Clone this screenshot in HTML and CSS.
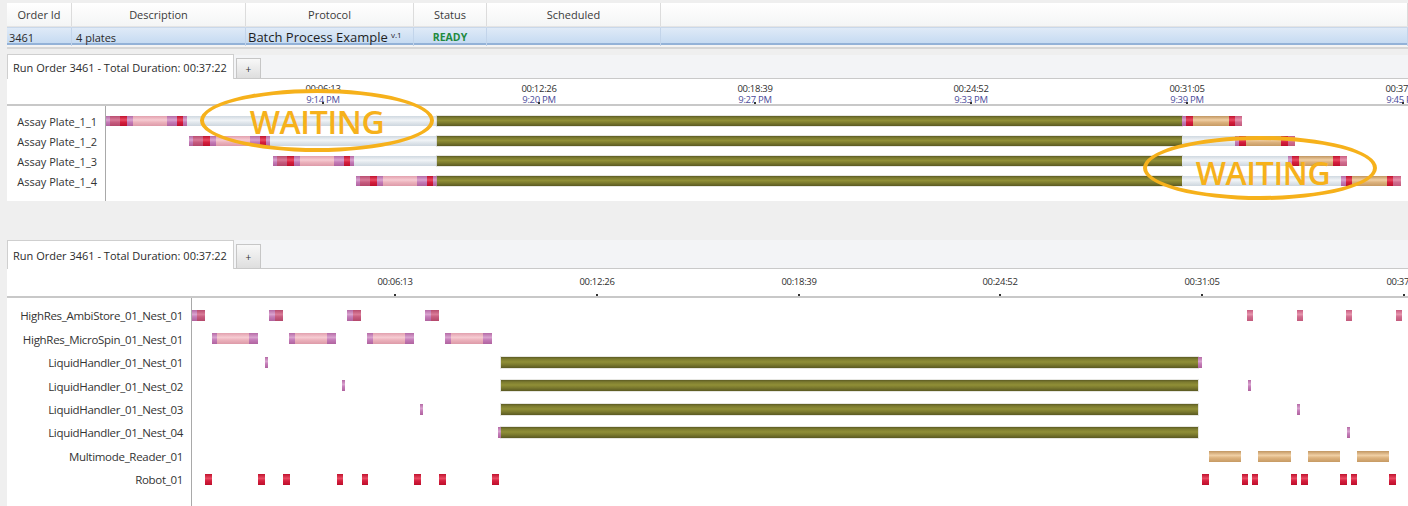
FILE: index.html
```html
<!DOCTYPE html>
<html lang="en">
<head>
<meta charset="utf-8">
<title>Run Orders</title>
<link rel="stylesheet" href="styles.css">
</head>
<body>

<div class="orders">
  <div class="orders-head">
    <div class="cell">Order Id</div>
    <div class="cell">Description</div>
    <div class="cell">Protocol</div>
    <div class="cell">Status</div>
    <div class="cell">Scheduled</div>
    <div class="cell"></div>
  </div>
  <div class="orders-row">
    <div class="cell id">3461</div>
    <div class="cell">4 plates</div>
    <div class="cell protocol">Batch Process Example<sup>v.1</sup></div>
    <div class="cell status">READY</div>
    <div class="cell"></div>
    <div class="cell"></div>
  </div>
</div>

<!-- Plate view: one lane per assay plate -->
<section class="run run-plates">
  <div class="tabs">
    <div class="tab active">Run Order 3461 - Total Duration: 00:37:22</div>
    <div class="tab add">+</div>
  </div>
  <div class="axis">
    <div class="gutter"></div>
    <div class="track">
      <div class="tick" style="left:217px"><span>00:06:13</span><em>9:14 PM</em></div>
      <div class="tick" style="left:433px"><span>00:12:26</span><em>9:20 PM</em></div>
      <div class="tick" style="left:649px"><span>00:18:39</span><em>9:27 PM</em></div>
      <div class="tick" style="left:865px"><span>00:24:52</span><em>9:33 PM</em></div>
      <div class="tick" style="left:1081px"><span>00:31:05</span><em>9:39 PM</em></div>
      <div class="tick" style="left:1297px"><span>00:37:18</span><em>9:45 PM</em></div>
    </div>
  </div>
  <div class="body">
    <div class="labels">
      <div class="label">Assay Plate_1_1</div>
      <div class="label">Assay Plate_1_2</div>
      <div class="label">Assay Plate_1_3</div>
      <div class="label">Assay Plate_1_4</div>
    </div>
    <div class="lanes">
      <div class="lane">
        <i class="seg purple" style="left:0px;width:4px"></i>
        <i class="seg store" style="left:4px;width:10px"></i>
        <i class="seg red" style="left:14px;width:7px"></i>
        <i class="seg purple" style="left:21px;width:6px"></i>
        <i class="seg spin" style="left:27px;width:34px"></i>
        <i class="seg purple" style="left:61px;width:10px"></i>
        <i class="seg red" style="left:71px;width:6px"></i>
        <i class="seg purple" style="left:77px;width:4px"></i>
        <i class="seg wait" style="left:81px;width:250px"></i>
        <i class="seg olive" style="left:331px;width:745px"></i>
        <i class="seg purple" style="left:1076px;width:4px"></i>
        <i class="seg red" style="left:1080px;width:7px"></i>
        <i class="seg tan" style="left:1087px;width:36px"></i>
        <i class="seg red" style="left:1123px;width:6px"></i>
        <i class="seg store-light" style="left:1129px;width:7px"></i>
      </div>
      <div class="lane">
        <i class="seg purple" style="left:83px;width:4px"></i>
        <i class="seg store" style="left:87px;width:10px"></i>
        <i class="seg red" style="left:97px;width:7px"></i>
        <i class="seg purple" style="left:104px;width:6px"></i>
        <i class="seg spin" style="left:110px;width:34px"></i>
        <i class="seg purple" style="left:144px;width:10px"></i>
        <i class="seg red" style="left:154px;width:6px"></i>
        <i class="seg purple" style="left:160px;width:4px"></i>
        <i class="seg wait" style="left:164px;width:167px"></i>
        <i class="seg olive" style="left:331px;width:745px"></i>
        <i class="seg wait" style="left:1076px;width:53px"></i>
        <i class="seg purple" style="left:1129px;width:4px"></i>
        <i class="seg red" style="left:1133px;width:7px"></i>
        <i class="seg tan" style="left:1140px;width:35px"></i>
        <i class="seg red" style="left:1175px;width:7px"></i>
        <i class="seg store-light" style="left:1182px;width:7px"></i>
      </div>
      <div class="lane">
        <i class="seg purple" style="left:167px;width:4px"></i>
        <i class="seg store" style="left:171px;width:10px"></i>
        <i class="seg red" style="left:181px;width:7px"></i>
        <i class="seg purple" style="left:188px;width:6px"></i>
        <i class="seg spin" style="left:194px;width:34px"></i>
        <i class="seg purple" style="left:228px;width:10px"></i>
        <i class="seg red" style="left:238px;width:6px"></i>
        <i class="seg purple" style="left:244px;width:4px"></i>
        <i class="seg wait" style="left:248px;width:83px"></i>
        <i class="seg olive" style="left:331px;width:745px"></i>
        <i class="seg wait" style="left:1076px;width:106px"></i>
        <i class="seg purple" style="left:1182px;width:4px"></i>
        <i class="seg red" style="left:1186px;width:7px"></i>
        <i class="seg tan" style="left:1193px;width:34px"></i>
        <i class="seg red" style="left:1227px;width:7px"></i>
        <i class="seg store-light" style="left:1234px;width:7px"></i>
      </div>
      <div class="lane">
        <i class="seg purple" style="left:250px;width:4px"></i>
        <i class="seg store" style="left:254px;width:10px"></i>
        <i class="seg red" style="left:264px;width:7px"></i>
        <i class="seg purple" style="left:271px;width:6px"></i>
        <i class="seg spin" style="left:277px;width:34px"></i>
        <i class="seg purple" style="left:311px;width:10px"></i>
        <i class="seg red" style="left:321px;width:6px"></i>
        <i class="seg purple" style="left:327px;width:4px"></i>
        <i class="seg olive" style="left:331px;width:745px"></i>
        <i class="seg wait" style="left:1076px;width:159px"></i>
        <i class="seg purple" style="left:1235px;width:5px"></i>
        <i class="seg red" style="left:1240px;width:6px"></i>
        <i class="seg tan" style="left:1246px;width:35px"></i>
        <i class="seg red" style="left:1281px;width:6px"></i>
        <i class="seg store-light" style="left:1287px;width:8px"></i>
      </div>
    </div>
  </div>
</section>

<!-- Resource view: one lane per instrument nest -->
<section class="run run-resources">
  <div class="tabs">
    <div class="tab active">Run Order 3461 - Total Duration: 00:37:22</div>
    <div class="tab add">+</div>
  </div>
  <div class="axis">
    <div class="gutter"></div>
    <div class="track">
      <div class="tick" style="left:203px"><span>00:06:13</span></div>
      <div class="tick" style="left:405px"><span>00:12:26</span></div>
      <div class="tick" style="left:607px"><span>00:18:39</span></div>
      <div class="tick" style="left:808px"><span>00:24:52</span></div>
      <div class="tick" style="left:1010px"><span>00:31:05</span></div>
      <div class="tick" style="left:1212px"><span>00:37:18</span></div>
    </div>
  </div>
  <div class="body">
    <div class="labels">
      <div class="label">HighRes_AmbiStore_01_Nest_01</div>
      <div class="label">HighRes_MicroSpin_01_Nest_01</div>
      <div class="label">LiquidHandler_01_Nest_01</div>
      <div class="label">LiquidHandler_01_Nest_02</div>
      <div class="label">LiquidHandler_01_Nest_03</div>
      <div class="label">LiquidHandler_01_Nest_04</div>
      <div class="label">Multimode_Reader_01</div>
      <div class="label">Robot_01</div>
    </div>
    <div class="lanes">
      <div class="lane">
        <i class="seg purple" style="left:0px;width:5px"></i>
        <i class="seg store" style="left:5px;width:8px"></i>
        <i class="seg purple" style="left:77px;width:6px"></i>
        <i class="seg store" style="left:83px;width:8px"></i>
        <i class="seg purple" style="left:155px;width:6px"></i>
        <i class="seg store" style="left:161px;width:8px"></i>
        <i class="seg purple" style="left:233px;width:6px"></i>
        <i class="seg store" style="left:239px;width:8px"></i>
        <i class="seg store-light" style="left:1055px;width:6px"></i>
        <i class="seg store-light" style="left:1105px;width:6px"></i>
        <i class="seg store-light" style="left:1154px;width:6px"></i>
        <i class="seg store-light" style="left:1204px;width:6px"></i>
      </div>
      <div class="lane">
        <i class="seg purple" style="left:20px;width:5px"></i>
        <i class="seg spin" style="left:25px;width:32px"></i>
        <i class="seg purple" style="left:57px;width:9px"></i>
        <i class="seg purple" style="left:97px;width:6px"></i>
        <i class="seg spin" style="left:103px;width:32px"></i>
        <i class="seg purple" style="left:135px;width:9px"></i>
        <i class="seg purple" style="left:175px;width:6px"></i>
        <i class="seg spin" style="left:181px;width:32px"></i>
        <i class="seg purple" style="left:213px;width:9px"></i>
        <i class="seg purple" style="left:253px;width:6px"></i>
        <i class="seg spin" style="left:259px;width:32px"></i>
        <i class="seg purple" style="left:291px;width:9px"></i>
      </div>
      <div class="lane">
        <i class="seg purple" style="left:73px;width:3px"></i>
        <i class="seg olive" style="left:309px;width:697px"></i>
        <i class="seg purple" style="left:1006px;width:4px"></i>
      </div>
      <div class="lane">
        <i class="seg purple" style="left:150px;width:3px"></i>
        <i class="seg olive" style="left:309px;width:697px"></i>
        <i class="seg purple" style="left:1056px;width:3px"></i>
      </div>
      <div class="lane">
        <i class="seg purple" style="left:228px;width:3px"></i>
        <i class="seg olive" style="left:309px;width:697px"></i>
        <i class="seg purple" style="left:1105px;width:3px"></i>
      </div>
      <div class="lane">
        <i class="seg purple" style="left:306px;width:3px"></i>
        <i class="seg olive" style="left:309px;width:697px"></i>
        <i class="seg purple" style="left:1155px;width:3px"></i>
      </div>
      <div class="lane">
        <i class="seg tan" style="left:1017px;width:32px"></i>
        <i class="seg tan" style="left:1066px;width:33px"></i>
        <i class="seg tan" style="left:1116px;width:32px"></i>
        <i class="seg tan" style="left:1165px;width:32px"></i>
      </div>
      <div class="lane">
        <i class="seg red" style="left:13px;width:7px"></i>
        <i class="seg red" style="left:66px;width:7px"></i>
        <i class="seg red" style="left:91px;width:7px"></i>
        <i class="seg red" style="left:145px;width:6px"></i>
        <i class="seg red" style="left:170px;width:6px"></i>
        <i class="seg red" style="left:222px;width:7px"></i>
        <i class="seg red" style="left:247px;width:7px"></i>
        <i class="seg red" style="left:300px;width:7px"></i>
        <i class="seg red" style="left:1010px;width:7px"></i>
        <i class="seg red" style="left:1050px;width:6px"></i>
        <i class="seg red" style="left:1060px;width:6px"></i>
        <i class="seg red" style="left:1099px;width:6px"></i>
        <i class="seg red" style="left:1109px;width:7px"></i>
        <i class="seg red" style="left:1148px;width:7px"></i>
        <i class="seg red" style="left:1159px;width:6px"></i>
        <i class="seg red" style="left:1197px;width:7px"></i>
      </div>
    </div>
  </div>
</section>

<!-- Annotations drawn over the charts -->
<div class="callout callout-first">WAITING</div>
<div class="callout callout-second">WAITING</div>

</body>
</html>
```

FILE: styles.css
```css
* {
  box-sizing: border-box;
}

html, body {
  height: 100%;
}

body {
  margin: 0;
  position: relative;
  overflow: hidden;
  background: #efefef;
  color: #333;
  font-family: "Open Sans", "Noto Sans", "DejaVu Sans", sans-serif;
  font-size: 11px;
}

/* ---------- order table ---------- */
.orders {
  margin: 3px 0 0 7px;
  border-bottom: 2px solid #d6d6d6;
  padding-bottom: 2px;
  background: #f4f4f4;
}

.orders-head,
.orders-row {
  display: grid;
  grid-template-columns: 65px 174px 168px 73px 174px 1fr;
}

.orders-head {
  height: 24px;
  background: linear-gradient(#ffffff, #f4f5f5);
  border-bottom: 1px solid #e4e4e4;
}

.orders-head .cell {
  display: flex;
  align-items: center;
  justify-content: center;
  border-right: 1px solid #dcdcdc;
  color: #3a3a3a;
  font-size: 11px;
}

.orders-row {
  height: 18px;
  background: linear-gradient(#dfeaf7, #c6dbf2);
  border-top: 1px solid #c9d8ea;
  border-bottom: 2px solid #93b2d8;
}

.orders-row .cell {
  display: flex;
  align-items: center;
  padding-left: 4px;
  border-right: 1px solid #c2d4ea;
  color: #2a2a2a;
  font-size: 11px;
  white-space: nowrap;
}

.orders-row .cell.id {
  padding-left: 2px;
}

.orders-row .protocol {
  padding-left: 2px;
  font-size: 13px;
  color: #1e1e1e;
}

.orders-row .protocol sup {
  font-size: 8px;
  margin-left: 3px;
  position: relative;
  top: -3px;
}

.orders-row .status {
  justify-content: center;
  padding-left: 0;
  color: #1f8a3f;
  font-weight: 700;
  font-size: 10.5px;
}

/* ---------- run panels ---------- */
.run {
  margin-left: 7px;
  background: #fff;
}

.run-plates {
  margin-top: 6px;
}

.run-resources {
  margin-top: 39px;
}

.tabs {
  display: flex;
  align-items: flex-end;
  height: 24px;
  background: #f3f4f6;
  border-bottom: 1px solid #c9c9c9;
}

.run-resources .tabs {
  height: 29px;
}

.tab {
  display: flex;
  align-items: center;
  white-space: nowrap;
}

.tab.active {
  height: 25px;
  margin-bottom: -1px;
  padding: 0 6px 0 5px;
  background: #fff;
  border: 1px solid #cfcfcf;
  border-bottom: none;
  color: #2b2b2b;
  font-size: 11px;
}

.run-resources .tab.active {
  height: 29px;
}

.tab.add {
  justify-content: center;
  width: 25px;
  height: 20px;
  margin-left: 2px;
  background: linear-gradient(#f8f8f8, #dedede);
  border: 1px solid #c6c6c6;
  border-bottom: none;
  font-size: 10px;
  color: #333;
}

.run-resources .tab.add {
  height: 24px;
}

/* time axis */
.axis {
  display: flex;
  height: 27px;
  border-bottom: 2px solid #c8c8c8;
}

.run-resources .axis {
  height: 29px;
}

.run-plates .gutter {
  width: 99px;
}

.run-resources .gutter {
  width: 185px;
}

.track {
  position: relative;
  flex: 1;
}

.tick {
  position: absolute;
  top: 4px;
  bottom: 0;
  width: 0;
}

.run-resources .tick {
  top: 7px;
}

.tick span,
.tick em {
  display: block;
  transform: translateX(-50%);
  width: 50px;
  text-align: center;
  font-size: 9.5px;
  line-height: 11px;
  font-style: normal;
  letter-spacing: -0.3px;
  white-space: nowrap;
}

.tick span {
  color: #2e2e2e;
}

.tick em {
  color: #4b4b9a;
}

.tick::after {
  content: "";
  position: absolute;
  left: -1px;
  bottom: 0;
  width: 2px;
  height: 2px;
  background: #333;
}

/* chart body */
.body {
  display: flex;
}

.labels {
  border-right: 1px solid #a9a9a9;
}

.run-plates .labels {
  width: 99px;
  padding-top: 5px;
  height: 95px;
}

.run-resources .labels {
  width: 185px;
  padding-top: 6px;
  height: 220px;
}

.label {
  display: flex;
  align-items: center;
  justify-content: flex-end;
  padding-right: 8px;
  color: #333;
  font-size: 11px;
  white-space: nowrap;
}

.run-plates .label {
  height: 20px;
}

.run-resources .label {
  height: 23.45px;
  font-size: 11.5px;
  letter-spacing: -0.3px;
}

.lanes {
  flex: 1;
  padding-top: 5px;
}

.run-resources .lanes {
  padding-top: 6px;
}

.lane {
  position: relative;
}

.run-plates .lane {
  height: 20px;
}

.run-resources .lane {
  height: 23.45px;
}

/* bar segments */
.seg {
  position: absolute;
  top: 5px;
  height: 10px;
}

.run-resources .seg {
  top: 6px;
  height: 11px;
}

.seg.purple {
  background: linear-gradient(#b56aa6, #d9a3cf 40%, #c47cb8 62%, #b0639f);
}

.seg.store {
  background: linear-gradient(#b94d70, #d97b98 40%, #c75c7f 62%, #b4486b);
}

.seg.store-light {
  background: linear-gradient(#c95d81, #e694ad 40%, #d06d8f 62%, #c35a7c);
}

.seg.red {
  background: linear-gradient(#c0122e, #ea4a62 40%, #d51f3e 62%, #bd0f2b);
}

.seg.spin {
  background: linear-gradient(#e2a0ae, #f6cbd2 40%, #ecb3bd 62%, #dd9aa8);
}

.seg.tan {
  background: linear-gradient(#c19661, #f0cfa4 40%, #ddb37f 62%, #c69a63);
}

.seg.olive {
  background: linear-gradient(#5c5b24, #7c7b2f 18%, #908f37 45%, #7b7a2e 70%, #5a5922);
  box-shadow: 0 0 0 1px rgba(160, 160, 140, 0.25);
}

.seg.wait {
  background: linear-gradient(#cfd8e0, #f1f4f7 42%, #e3e9ee 62%, #cdd6de);
}

/* ---------- annotations ---------- */
.callout {
  position: absolute;
  display: flex;
  align-items: center;
  justify-content: center;
  border: 4px solid #f6b11b;
  border-radius: 50%;
  color: #f6b11b;
  font-family: "Open Sans", "Noto Sans", sans-serif;
  font-weight: 600;
  font-size: 32px;
  letter-spacing: -0.4px;
}

.callout-first {
  left: 200px;
  top: 89px;
  width: 234px;
  height: 63px;
  padding-top: 2px;
}

.callout-second {
  left: 1143px;
  top: 136px;
  width: 234px;
  height: 64px;
  padding-top: 8px;
  padding-left: 6px;
}
```
